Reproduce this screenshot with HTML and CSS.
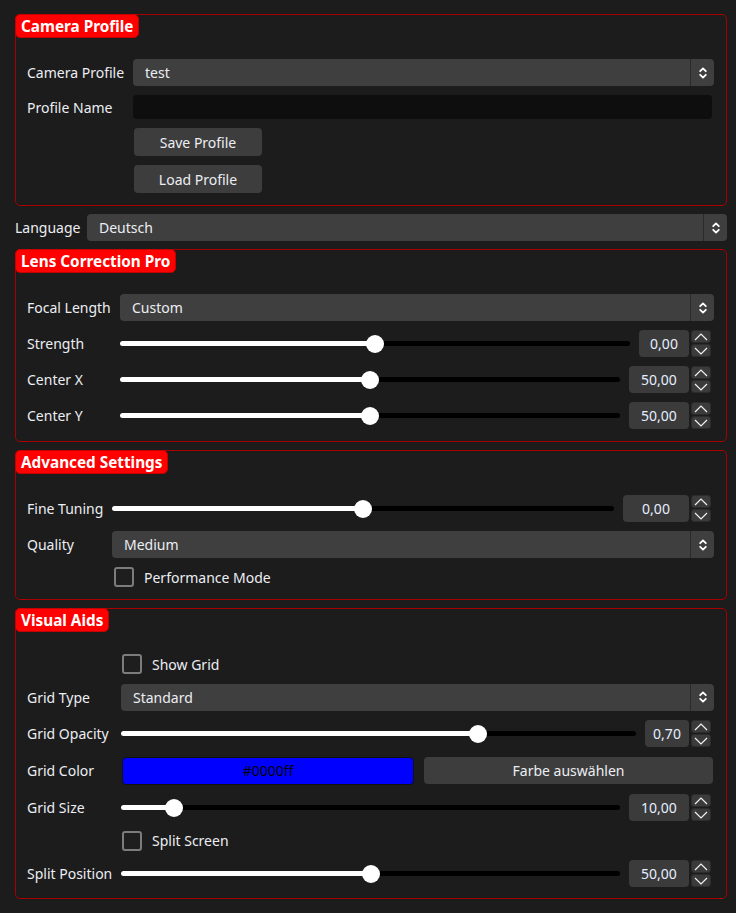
FILE: index.html
```html
<!DOCTYPE html>
<html>
<head>
<meta charset="utf-8">
<link rel="stylesheet" href="styles.css">
</head>
<body>
<div class="page">

  <section class="group group--profile">
    <h2 class="group-title">Camera Profile</h2>
    <div class="form">
      <span class="form-label">Camera Profile</span>
      <div class="combo"><span class="combo-text">test</span><span class="combo-arrow"><svg width="8" height="14" viewBox="0 0 8 14"><polyline points="1.2,5.2 4,2.4 6.8,5.2"/><polyline points="1.2,8.8 4,11.6 6.8,8.8"/></svg></span></div>
      <span class="form-label">Profile Name</span>
      <div class="line-edit"></div>
      <button class="button button--profile form-field">Save Profile</button>
      <button class="button button--profile form-field">Load Profile</button>
    </div>
  </section>

  <div class="lang-row">
    <span class="form-label">Language</span>
    <div class="combo"><span class="combo-text">Deutsch</span><span class="combo-arrow"><svg width="8" height="14" viewBox="0 0 8 14"><polyline points="1.2,5.2 4,2.4 6.8,5.2"/><polyline points="1.2,8.8 4,11.6 6.8,8.8"/></svg></span></div>
  </div>

  <section class="group group--lens">
    <h2 class="group-title">Lens Correction Pro</h2>
    <div class="form">
      <span class="form-label">Focal Length</span>
      <div class="combo"><span class="combo-text">Custom</span><span class="combo-arrow"><svg width="8" height="14" viewBox="0 0 8 14"><polyline points="1.2,5.2 4,2.4 6.8,5.2"/><polyline points="1.2,8.8 4,11.6 6.8,8.8"/></svg></span></div>

      <span class="form-label">Strength</span>
      <div class="slider-row">
        <div class="slider" style="--v:0.5"><div class="slider-fill"></div><div class="slider-handle"></div></div>
        <div class="spin">
          <div class="spin-value spin-value--w50">0,00</div>
          <div class="spin-arrows">
            <div class="spin-btn"><svg width="14" height="8" viewBox="0 0 14 8"><polyline points="1,7 7,1 13,7"/></svg></div>
            <div class="spin-btn"><svg width="14" height="8" viewBox="0 0 14 8"><polyline points="1,1 7,7 13,1"/></svg></div>
          </div>
        </div>
      </div>

      <span class="form-label">Center X</span>
      <div class="slider-row">
        <div class="slider" style="--v:0.5"><div class="slider-fill"></div><div class="slider-handle"></div></div>
        <div class="spin">
          <div class="spin-value spin-value--w60">50,00</div>
          <div class="spin-arrows">
            <div class="spin-btn"><svg width="14" height="8" viewBox="0 0 14 8"><polyline points="1,7 7,1 13,7"/></svg></div>
            <div class="spin-btn"><svg width="14" height="8" viewBox="0 0 14 8"><polyline points="1,1 7,7 13,1"/></svg></div>
          </div>
        </div>
      </div>

      <span class="form-label">Center Y</span>
      <div class="slider-row">
        <div class="slider" style="--v:0.5"><div class="slider-fill"></div><div class="slider-handle"></div></div>
        <div class="spin">
          <div class="spin-value spin-value--w60">50,00</div>
          <div class="spin-arrows">
            <div class="spin-btn"><svg width="14" height="8" viewBox="0 0 14 8"><polyline points="1,7 7,1 13,7"/></svg></div>
            <div class="spin-btn"><svg width="14" height="8" viewBox="0 0 14 8"><polyline points="1,1 7,7 13,1"/></svg></div>
          </div>
        </div>
      </div>
    </div>
  </section>

  <section class="group group--advanced">
    <h2 class="group-title">Advanced Settings</h2>
    <div class="form">
      <span class="form-label">Fine Tuning</span>
      <div class="slider-row">
        <div class="slider" style="--v:0.5"><div class="slider-fill"></div><div class="slider-handle"></div></div>
        <div class="spin">
          <div class="spin-value spin-value--w66">0,00</div>
          <div class="spin-arrows">
            <div class="spin-btn"><svg width="14" height="8" viewBox="0 0 14 8"><polyline points="1,7 7,1 13,7"/></svg></div>
            <div class="spin-btn"><svg width="14" height="8" viewBox="0 0 14 8"><polyline points="1,1 7,7 13,1"/></svg></div>
          </div>
        </div>
      </div>

      <span class="form-label">Quality</span>
      <div class="combo"><span class="combo-text">Medium</span><span class="combo-arrow"><svg width="8" height="14" viewBox="0 0 8 14"><polyline points="1.2,5.2 4,2.4 6.8,5.2"/><polyline points="1.2,8.8 4,11.6 6.8,8.8"/></svg></span></div>

      <label class="check form-field check--advanced"><span class="check-box"></span><span>Performance Mode</span></label>
    </div>
  </section>

  <section class="group group--visual">
    <h2 class="group-title">Visual Aids</h2>
    <div class="form">
      <label class="check form-field"><span class="check-box"></span><span>Show Grid</span></label>

      <span class="form-label">Grid Type</span>
      <div class="combo"><span class="combo-text">Standard</span><span class="combo-arrow"><svg width="8" height="14" viewBox="0 0 8 14"><polyline points="1.2,5.2 4,2.4 6.8,5.2"/><polyline points="1.2,8.8 4,11.6 6.8,8.8"/></svg></span></div>

      <span class="form-label">Grid Opacity</span>
      <div class="slider-row">
        <div class="slider" style="--v:0.7"><div class="slider-fill"></div><div class="slider-handle"></div></div>
        <div class="spin">
          <div class="spin-value spin-value--w44">0,70</div>
          <div class="spin-arrows">
            <div class="spin-btn"><svg width="14" height="8" viewBox="0 0 14 8"><polyline points="1,7 7,1 13,7"/></svg></div>
            <div class="spin-btn"><svg width="14" height="8" viewBox="0 0 14 8"><polyline points="1,1 7,7 13,1"/></svg></div>
          </div>
        </div>
      </div>

      <span class="form-label">Grid Color</span>
      <div class="color-pair">
        <div class="color-swatch">#0000ff</div>
        <button class="button">Farbe auswählen</button>
      </div>

      <span class="form-label">Grid Size</span>
      <div class="slider-row">
        <div class="slider" style="--v:0.0909"><div class="slider-fill"></div><div class="slider-handle"></div></div>
        <div class="spin">
          <div class="spin-value spin-value--w60">10,00</div>
          <div class="spin-arrows">
            <div class="spin-btn"><svg width="14" height="8" viewBox="0 0 14 8"><polyline points="1,7 7,1 13,7"/></svg></div>
            <div class="spin-btn"><svg width="14" height="8" viewBox="0 0 14 8"><polyline points="1,1 7,7 13,1"/></svg></div>
          </div>
        </div>
      </div>

      <label class="check form-field"><span class="check-box"></span><span>Split Screen</span></label>

      <span class="form-label">Split Position</span>
      <div class="slider-row">
        <div class="slider" style="--v:0.5"><div class="slider-fill"></div><div class="slider-handle"></div></div>
        <div class="spin">
          <div class="spin-value spin-value--w60">50,00</div>
          <div class="spin-arrows">
            <div class="spin-btn"><svg width="14" height="8" viewBox="0 0 14 8"><polyline points="1,7 7,1 13,7"/></svg></div>
            <div class="spin-btn"><svg width="14" height="8" viewBox="0 0 14 8"><polyline points="1,1 7,7 13,1"/></svg></div>
          </div>
        </div>
      </div>
    </div>
  </section>

</div>
</body>
</html>
```

FILE: styles.css
```css
* { box-sizing: border-box; }

body {
  margin: 0;
  background: #1c1c1c;
  color: #eceef3;
  font-family: "Noto Sans", "Open Sans", sans-serif;
  font-size: 14px;
  line-height: 1.2;
}

.page {
  display: flex;
  flex-direction: column;
  gap: 8px;
  padding: 14px 9px 0 15px;
}

.group {
  position: relative;
  border: 1px solid #a80000;
  border-radius: 5px;
  padding: 44px 12px 12px 11px;
}

.group-title {
  position: absolute;
  left: -1px;
  top: -1px;
  margin: 0;
  height: 24px;
  padding: 1px 5px 0 5px;
  display: flex;
  align-items: center;
  background: #ff0000;
  border: 1px solid #c40000;
  border-radius: 5px;
  color: #ffffff;
  font-size: 15.3px;
  font-weight: bold;
}

.form {
  display: grid;
  row-gap: 9px;
  align-items: center;
}

.group--profile .form { grid-template-columns: 106px 1fr; }
.group--lens .form { grid-template-columns: 93px 1fr; }
.group--advanced .form { grid-template-columns: 85px 1fr; }
.group--visual .form { grid-template-columns: 94px 1fr; row-gap: 9.5px; }
.group--visual { padding-top: 45px; padding-bottom: 11px; }

.form-label {
  white-space: nowrap;
  padding-top: 2px;
}

.form-field {
  grid-column: 2;
}

.lang-row {
  display: grid;
  grid-template-columns: 72px 1fr;
  align-items: center;
}

/* combo box */
.combo {
  display: flex;
  height: 27px;
  background: #3f3f3f;
  border-radius: 4px;
}

.combo-text {
  flex: 1;
  display: flex;
  align-items: center;
  padding: 2px 0 0 12px;
}

.combo-arrow {
  width: 24px;
  border-left: 1px solid #2a2a2a;
  display: flex;
  align-items: center;
  justify-content: center;
}

.combo-arrow polyline {
  fill: none;
  stroke: #ffffff;
  stroke-width: 1.8;
  stroke-linecap: round;
  stroke-linejoin: round;
}

/* line edit */
.line-edit {
  height: 24px;
  margin-right: 2px;
  background: #0e0e0e;
  border-radius: 4px;
}

/* buttons */
.button {
  height: 27px;
  display: flex;
  align-items: center;
  justify-content: center;
  background: #3d3d3d;
  border: none;
  border-radius: 4px;
  color: #eceef3;
  font: inherit;
  padding: 2px 0 0 0;
}

.button--profile {
  width: 128px;
  height: 28px;
  margin-left: 1px;
}

/* slider */
.slider-row {
  display: flex;
  align-items: center;
  gap: 9px;
  margin-right: 3px;
}

.slider {
  position: relative;
  flex: 1;
  height: 5px;
  background: #000000;
  border-radius: 3px;
}

.slider-fill {
  position: absolute;
  left: 0;
  top: 0;
  bottom: 0;
  width: calc(9px + (100% - 18px) * var(--v));
  background: #ffffff;
  border-radius: 3px;
}

.slider-handle {
  position: absolute;
  top: 50%;
  left: calc(9px + (100% - 18px) * var(--v));
  width: 18px;
  height: 18px;
  margin: -9px 0 0 -9px;
  border-radius: 50%;
  background: #ffffff;
}

/* spin box */
.spin {
  display: flex;
  gap: 2px;
  height: 27px;
}

.spin-value {
  display: flex;
  align-items: center;
  justify-content: center;
  padding-top: 2px;
  background: #3b3b3b;
  border-radius: 4px;
  color: #e6eeff;
}

.spin-value--w44 { width: 44px; }
.spin-value--w50 { width: 50px; }
.spin-value--w60 { width: 60px; }
.spin-value--w66 { width: 66px; }

.spin-arrows {
  width: 20px;
  display: flex;
  flex-direction: column;
  gap: 1px;
}

.spin-btn {
  flex: 1;
  display: flex;
  align-items: center;
  justify-content: center;
  background: #3b3b3b;
  border: 1px solid #2c2c2c;
  border-radius: 3px;
}

.spin-btn polyline {
  fill: none;
  stroke: #f2f2f2;
  stroke-width: 1.2;
}

/* checkbox */
.check {
  display: flex;
  align-items: center;
  gap: 10px;
  height: 20px;
  margin-left: 1px;
}

.check span:last-child {
  padding-top: 2px;
}

.check--advanced {
  margin-left: 2px;
}

.check-box {
  width: 20px;
  height: 20px;
  border: 2px solid #7c7c7c;
  border-radius: 3px;
  background: #1e1e1e;
}

/* colour picker */
.color-pair {
  display: grid;
  grid-template-columns: 292px 1fr;
  gap: 10px;
  margin: 0 1px 0 1px;
}

.color-swatch {
  height: 28px;
  display: flex;
  align-items: center;
  justify-content: center;
  padding-top: 2px;
  background: #0000ff;
  border: 1px solid #111111;
  border-radius: 4px;
  color: #000000;
}
```
